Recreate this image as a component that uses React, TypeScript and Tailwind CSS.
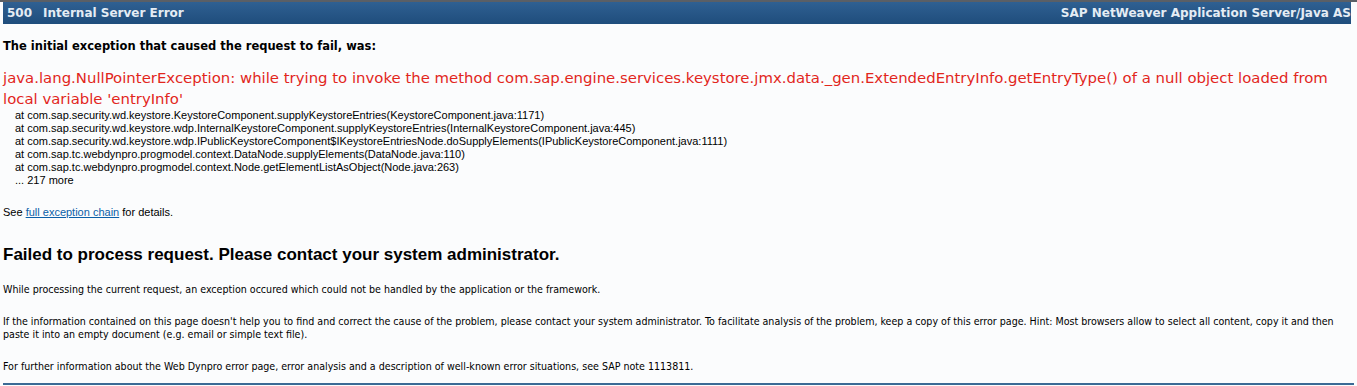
import React from 'react';

const stack = [
  'at com.sap.security.wd.keystore.KeystoreComponent.supplyKeystoreEntries(KeystoreComponent.java:1171)',
  'at com.sap.security.wd.keystore.wdp.InternalKeystoreComponent.supplyKeystoreEntries(InternalKeystoreComponent.java:445)',
  'at com.sap.security.wd.keystore.wdp.IPublicKeystoreComponent$IKeystoreEntriesNode.doSupplyElements(IPublicKeystoreComponent.java:1111)',
  'at com.sap.tc.webdynpro.progmodel.context.DataNode.supplyElements(DataNode.java:110)',
  'at com.sap.tc.webdynpro.progmodel.context.Node.getElementListAsObject(Node.java:263)',
  '... 217 more',
];

export default function App() {
  return (
    <div className="min-h-[386px] bg-[#fbfcfd] text-black font-['Liberation_Sans',Arial,sans-serif]">
      {/* Header */}
      <div className="border-t-2 border-[#5a5f66] pl-[3px] pr-[6px]">
        <div className="h-[22px] bg-gradient-to-b from-[#2f6092] to-[#1f4d7c] flex items-center justify-between pl-[4px] font-['DejaVu_Sans',Verdana,sans-serif] text-[12px] font-bold text-[#e4ecf4]">
          <span>
            500<span className="ml-[11px]">Internal Server Error</span>
          </span>
          <span>SAP NetWeaver Application Server/Java AS</span>
        </div>
      </div>

      <div className="px-[3px]">
        <p className="mt-[14px] text-[11.5px] font-bold font-['DejaVu_Sans',Verdana,sans-serif] leading-[16px]">
          The initial exception that caused the request to fail, was:
        </p>

        <p className="mt-[14px] text-[14.9px] leading-[21px] text-[#e2261c] font-['DejaVu_Sans',Verdana,sans-serif]">
          java.lang.NullPointerException: while trying to invoke the method com.sap.engine.services.keystore.jmx.data._gen.ExtendedEntryInfo.getEntryType() of a null object loaded from local variable 'entryInfo'
        </p>

        <div className="pl-[12px] text-[11px] leading-[13px] -mt-[1px]">
          {stack.map((s) => (
            <div key={s}>{s}</div>
          ))}
        </div>

        <p className="mt-[19px] text-[11px] leading-[13px]">
          See <a className="text-[#0b5fa8] underline" href="#">full exception chain</a> for details.
        </p>

        <h1 className="mt-[25px] text-[17px] font-bold leading-[22px]">
          Failed to process request. Please contact your system administrator.
        </h1>

        <div className="font-['DejaVu_Sans_Condensed','Liberation_Sans_Narrow',sans-serif] text-[10.6px] leading-[13px]">
          <p className="mt-[17px]">
            While processing the current request, an exception occured which could not be handled by the application or the framework.
          </p>

          <p className="mt-[19px] max-w-[1345px]">
            If the information contained on this page doesn't help you to find and correct the cause of the problem, please contact your system administrator. To facilitate analysis of the problem, keep a copy of this error page. Hint: Most browsers allow to select all content, copy it and then paste it into an empty document (e.g. email or simple text file).
          </p>

          <p className="mt-[19px]">
            For further information about the Web Dynpro error page, error analysis and a description of well-known error situations, see SAP note 1113811.
          </p>
        </div>

        <div className="mt-[10px] border-t-2 border-[#3b6a95]" />
      </div>
    </div>
  );
}
